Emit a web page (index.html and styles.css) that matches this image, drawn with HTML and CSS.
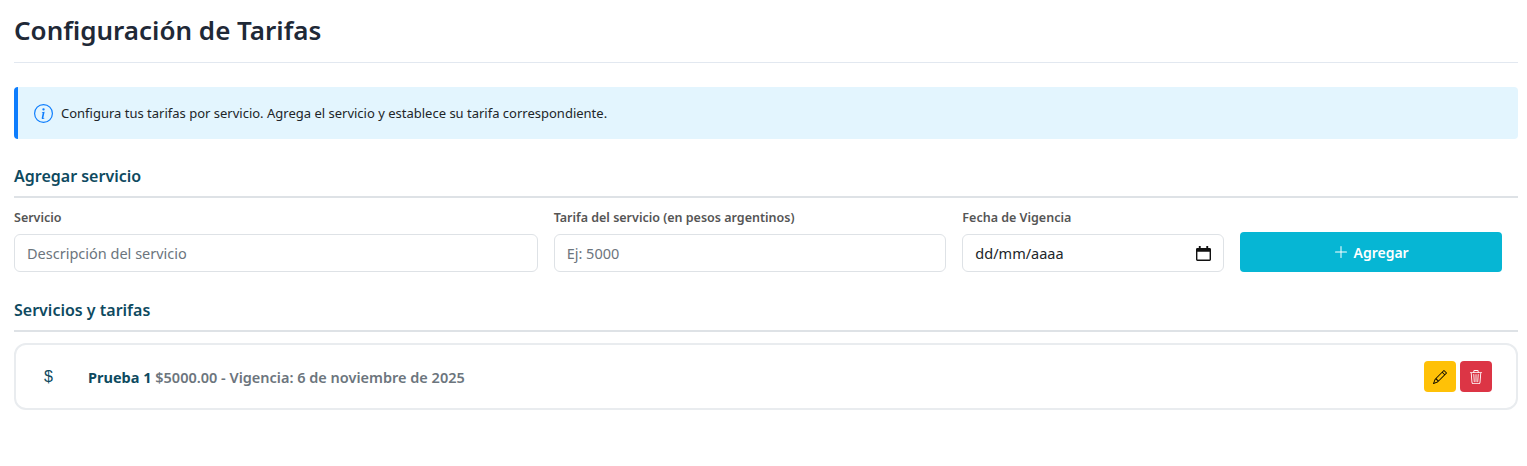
FILE: index.html

```html
<!DOCTYPE html>
<html lang="es">
<head>
    <meta charset="UTF-8">
    <meta name="viewport" content="width=device-width, initial-scale=1.0">
    <title>Configuración de Tarifas</title>
    <link rel="stylesheet" href="styles.css">
</head>
<body>
    <div class="page">
        <h1 class="page-title">Configuración de Tarifas</h1>

        <div class="alert-info">
            <svg class="alert-icon" viewBox="0 0 16 16" fill="currentColor">
                <path d="M8 15A7 7 0 1 1 8 1a7 7 0 0 1 0 14zm0 1A8 8 0 1 0 8 0a8 8 0 0 0 0 16z"/>
                <path d="m8.93 6.588-2.29.287-.082.38.45.083c.294.07.352.176.288.469l-.738 3.468c-.194.897.105 1.319.808 1.319.545 0 1.178-.252 1.465-.598l.088-.416c-.2.176-.492.246-.686.246-.275 0-.375-.193-.304-.533L8.93 6.588zM9 4.5a1 1 0 1 1-2 0 1 1 0 0 1 2 0z"/>
            </svg>
            <span>Configura tus tarifas por servicio. Agrega el servicio y establece su tarifa correspondiente.</span>
        </div>

        <h2 class="section-title">Agregar servicio</h2>
        <form class="service-form">
            <div class="field">
                <label class="field-label" for="servicio">Servicio</label>
                <input class="field-input" id="servicio" type="text" placeholder="Descripción del servicio">
            </div>
            <div class="field">
                <label class="field-label" for="tarifa">Tarifa del servicio (en pesos argentinos)</label>
                <input class="field-input" id="tarifa" type="text" placeholder="Ej: 5000">
            </div>
            <div class="field">
                <label class="field-label" for="fecha">Fecha de Vigencia</label>
                <div class="field-input date-input" id="fecha">
                    <span>dd/mm/aaaa</span>
                    <svg class="date-icon" viewBox="0 0 16 16" fill="currentColor">
                        <path d="M3 0h2v2h6V0h2v2h1.5A1.5 1.5 0 0 1 16 3.5v11a1.5 1.5 0 0 1-1.500 1.500h-13A1.500 1.500 0 0 1 0 14.500v-11A1.500 1.500 0 0 1 1.500 2H3zM1.500 6v8.500h13V6z"/>
                    </svg>
                </div>
            </div>
            <button class="add-btn" type="button">
                <svg class="add-icon" viewBox="0 0 16 16" fill="currentColor">
                    <path d="M8 2a.5.5 0 0 1 .5.5v5h5a.5.5 0 0 1 0 1h-5v5a.5.5 0 0 1-1 0v-5h-5a.5.5 0 0 1 0-1h5v-5A.5.5 0 0 1 8 2z"/>
                </svg>
                Agregar
            </button>
        </form>

        <h2 class="section-title">Servicios y tarifas</h2>
        <div class="service-item">
            <span class="service-symbol">$</span>
            <div class="service-text">
                <strong>Prueba 1</strong> $5000.00 - Vigencia: 6 de noviembre de 2025
            </div>
            <div class="service-actions">
                <button class="icon-btn edit-btn" type="button">
                    <svg viewBox="0 0 16 16" fill="currentColor">
                        <path d="M12.146.146a.5.5 0 0 1 .708 0l3 3a.5.5 0 0 1 0 .708l-10 10a.5.5 0 0 1-.168.11l-5 2a.5.5 0 0 1-.65-.65l2-5a.5.5 0 0 1 .11-.168l10-10zM11.207 2.500 13.500 4.793 14.793 3.500 12.500 1.207 11.207 2.500zm1.586 3L10.500 3.207 4 9.707V10h.5a.5.5 0 0 1 .5.5v.5h.5a.5.5 0 0 1 .5.5v.5h.293l6.500-6.500zm-9.761 5.175-.106.106-1.528 3.821 3.821-1.528.106-.106A.5.5 0 0 1 5 12.500V12h-.5a.5.5 0 0 1-.5-.5V11h-.5a.5.5 0 0 1-.468-.325z"/>
                    </svg>
                </button>
                <button class="icon-btn delete-btn" type="button">
                    <svg viewBox="0 0 16 16" fill="currentColor">
                        <path d="M6.500 1h3a.5.5 0 0 1 .5.5v1H6v-1a.5.5 0 0 1 .5-.5ZM11 2.500v-1A1.500 1.500 0 0 0 9.500 0h-3A1.500 1.500 0 0 0 5 1.500v1H1.500a.5.5 0 0 0 0 1h.538l.853 10.660A2 2 0 0 0 4.885 16h6.230a2 2 0 0 0 1.994-1.840l.853-10.660h.538a.5.5 0 0 0 0-1H11Zm1.958 1-.846 10.580a1 1 0 0 1-.997.920h-6.230a1 1 0 0 1-.997-.920L3.042 3.500h9.916Zm-7.487 1a.5.5 0 0 1 .528.470l.5 8.500a.5.5 0 0 1-.998.060L5 5.030a.5.5 0 0 1 .47-.530Zm5.058 0a.5.5 0 0 1 .47.530l-.5 8.500a.5.5 0 1 1-.998-.060l.5-8.500a.5.5 0 0 1 .528-.470ZM8 4.500a.5.5 0 0 1 .5.5v8.500a.5.5 0 0 1-1 0V5a.5.5 0 0 1 .5-.5Z"/>
                    </svg>
                </button>
            </div>
        </div>
    </div>
</body>
</html>
```

FILE: styles.css

```css
* {
    box-sizing: border-box;
}
body {
    font-family: "Noto Sans", "Open Sans", sans-serif;
    background: #fff;
    margin: 0;
    color: #212529;
}
.page {
    padding: 0 9px 0 14px;
}
.page-title {
    margin: 0 0 24px 0;
    height: 63px;
    padding-top: 11px;
    font-size: 26px;
    line-height: 38px;
    font-weight: 600;
    color: #1f2937;
    border-bottom: 1px solid #e2e8f0;
}
.alert-info {
    display: flex;
    align-items: center;
    height: 52px;
    margin-bottom: 24px;
    padding-left: 16px;
    font-size: 13px;
    color: #212529;
    background: #e3f5fe;
    border-left: 4px solid #0d7dfd;
    border-radius: 4px;
}
.alert-icon {
    width: 19px;
    height: 19px;
    margin-right: 8px;
    color: #0d7dfd;
}
.section-title {
    margin: 0 0 11px 0;
    height: 35px;
    padding-top: 2px;
    font-size: 16px;
    line-height: 22px;
    font-weight: 600;
    color: #0e4a5f;
    border-bottom: 2px solid #dee2e6;
}
.service-form {
    display: grid;
    grid-template-columns: 4fr 3fr 2fr 2fr;
    gap: 16px;
    align-items: end;
    padding-right: 16px;
    margin-bottom: 25px;
}
.field-label {
    display: block;
    margin-bottom: 7px;
    font-size: 12.500px;
    line-height: 18px;
    font-weight: 600;
    color: #555;
}
.field-input {
    display: block;
    width: 100%;
    height: 38px;
    padding: 0 12px;
    font-family: inherit;
    font-size: 14.500px;
    color: #212529;
    background: #fff;
    border: 1px solid #dee2e6;
    border-radius: 6px;
}
.field-input::placeholder {
    color: #6c757d;
    opacity: 1;
}
.date-input {
    display: flex;
    align-items: center;
    justify-content: space-between;
}
.date-icon {
    width: 15px;
    height: 15px;
    color: #111;
}
.add-btn {
    display: flex;
    align-items: center;
    justify-content: center;
    gap: 4px;
    height: 40px;
    font-family: inherit;
    font-size: 14px;
    font-weight: 600;
    color: #fff;
    background: #06b6d4;
    border: none;
    border-radius: 4px;
}
.add-icon {
    width: 16px;
    height: 16px;
}
.service-item {
    display: flex;
    align-items: center;
    height: 67px;
    padding: 0 24px 0 28px;
    background: #fff;
    border: 2px solid #e9ecef;
    border-radius: 12px;
}
.service-symbol {
    width: 44px;
    font-family: "Liberation Sans", sans-serif;
    font-size: 16px;
    color: #0e4a5f;
}
.service-text {
    flex: 1;
    font-size: 14.500px;
    font-weight: 600;
    color: #6c757d;
}
.service-text strong {
    font-weight: 700;
    color: #0e4a5f;
}
.service-actions {
    display: flex;
    gap: 4px;
}
.icon-btn {
    display: flex;
    align-items: center;
    justify-content: center;
    width: 32px;
    height: 31px;
    padding: 0;
    border: none;
    border-radius: 4px;
}
.icon-btn svg {
    width: 14px;
    height: 14px;
}
.edit-btn {
    color: #000;
    background: #ffc107;
}
.delete-btn {
    color: #fff;
    background: #dc3545;
}
```
